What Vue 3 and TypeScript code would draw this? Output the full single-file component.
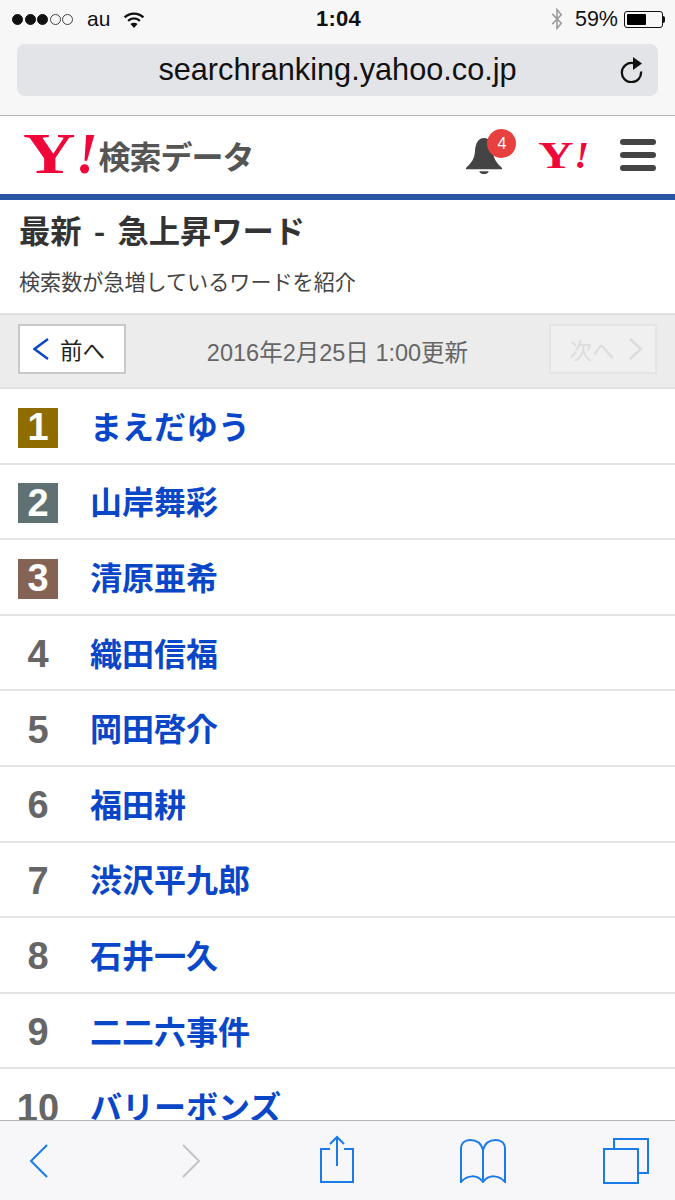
<template>
  <div class="phone">
    <div class="chrome">
      <div class="status">
        <div class="status__left">
          <span class="signal">
            <i v-for="n in 5" :key="n" class="dot" :class="{ 'dot--off': n > 3 }"></i>
          </span>
          <span class="carrier">au</span>
          <svg class="wifi" width="22" height="17" viewBox="0 0 24 19">
            <path d="M1.500 7.200C7.500 1.400 16.500 1.400 22.500 7.200" fill="none" stroke="#111" stroke-width="2.600" />
            <path d="M5.400 11C9.200 7.400 14.800 7.400 18.600 11" fill="none" stroke="#111" stroke-width="2.600" />
            <path d="M12 19 8 14.400C10.200 12.600 13.800 12.600 16 14.400Z" fill="#111" />
          </svg>
        </div>
        <div class="status__time">1:04</div>
        <div class="status__right">
          <svg class="bt" width="14" height="24" viewBox="0 0 14 28">
            <path d="M1.500 8 12 19 7 25V3l5 6L1.500 20" fill="none" stroke="#9a9a9a" stroke-width="1.800" />
          </svg>
          <span class="battery-pct">59%</span>
          <span class="battery"><span class="battery__fill"></span></span>
          <span class="battery-tip"></span>
        </div>
      </div>
      <div class="urlbar">
        <span class="urlbar__text">searchranking.yahoo.co.jp</span>
        <svg class="reload" width="24" height="26" viewBox="0 0 24 26">
          <path d="M13 6.100A9.600 9.600 0 1 0 21 14.500" fill="none" stroke="#111" stroke-width="2.300" />
          <path d="M13 0 22 6.500 13 13Z" fill="#111" />
        </svg>
      </div>
    </div>

    <header class="head">
      <div class="brand">
        <span class="ylogo ylogo--big"><b>Y</b><em>!</em></span>
        <span class="brand__name">検索データ</span>
      </div>
      <div class="head__tools">
        <div class="bell">
          <svg width="38" height="38" viewBox="0 0 40 40">
            <path d="M20 1C13 1 11 8 10.500 15 10 23 7 27 1 32.500V34H39V32.500C33 27 30 23 29.500 15 29 8 27 1 20 1Z" fill="#444" />
            <path d="M15 36H25C24 40 16 40 15 36Z" fill="#444" />
          </svg>
          <span class="bell__badge">4</span>
        </div>
        <span class="ylogo ylogo--small"><b>Y</b><em>!</em></span>
        <div class="burger"><i></i><i></i><i></i></div>
      </div>
    </header>

    <section class="intro">
      <h1>最新 - 急上昇ワード</h1>
      <p>検索数が急増しているワードを紹介</p>
    </section>

    <nav class="pager">
      <div class="pager__btn pager__btn--prev">
        <svg width="16" height="24" viewBox="0 0 16 24">
          <path d="M15 2 1.500 12 15 22" fill="none" stroke="#0b46c4" stroke-width="2.400" />
        </svg>
        <span>前へ</span>
      </div>
      <div class="pager__date">2016年2月25日 1:00更新</div>
      <div class="pager__btn pager__btn--off">
        <span>次へ</span>
        <svg width="16" height="24" viewBox="0 0 16 24">
          <path d="M2 2l11 10L2 22" fill="none" stroke="#dcdcdc" stroke-width="2.400" />
        </svg>
      </div>
    </nav>

    <ol class="ranks">
      <li v-for="(word, i) in words" :key="word" class="rank">
        <span class="rank__no" :class="i < 3 ? `rank__no--${i + 1}` : ''">{{ i + 1 }}</span>
        <a class="rank__word">{{ word }}</a>
      </li>
    </ol>

    <footer class="toolbar">
      <svg width="20" height="34" viewBox="0 0 20 34" class="tool tool--back">
        <path d="M18 1 2 17l16 16" fill="none" stroke="#1a7be8" stroke-width="2" />
      </svg>
      <svg width="20" height="34" viewBox="0 0 20 34" class="tool tool--next">
        <path d="M2 1l16 16L2 33" fill="none" stroke="#c4c4c6" stroke-width="2" />
      </svg>
      <svg width="36" height="48" viewBox="0 0 36 48" class="tool tool--share">
        <path d="M11 14H2V47H34V14H25M18 31V2M11 9 18 2l7 7" fill="none" stroke="#1a7be8" stroke-width="2" />
      </svg>
      <svg width="46" height="44" viewBox="0 0 46 44" class="tool tool--book">
        <path d="M23 11C21 3 15 1 10 1 5 1 1 4 1 10V43C7 36 17 35 23 43 29 35 39 36 45 43V10C45 4 41 1 36 1 31 1 25 3 23 11V41" fill="none" stroke="#1a7be8" stroke-width="2" />
      </svg>
      <svg width="46" height="46" viewBox="0 0 46 46" class="tool tool--tabs">
        <path d="M11 10V1H45V35H35" fill="none" stroke="#1a7be8" stroke-width="2" />
        <rect x="1" y="11" width="34" height="34" fill="none" stroke="#1a7be8" stroke-width="2" />
      </svg>
    </footer>
  </div>
</template>

<script setup lang="ts">
const words: string[] = [
  "まえだゆう",
  "山岸舞彩",
  "清原亜希",
  "織田信福",
  "岡田啓介",
  "福田耕",
  "渋沢平九郎",
  "石井一久",
  "二二六事件",
  "バリーボンズ",
];
</script>

<style>
html,
body {
  margin: 0;
  background: #fff;
}
</style>

<style scoped>
.phone {
  width: 675px;
  height: 1200px;
  display: flex;
  flex-direction: column;
  overflow: hidden;
  background: #fff;
  font-family: "Noto Sans CJK JP", "Liberation Sans", sans-serif;
}

.chrome {
  height: 115px;
  flex: none;
  background: #f7f7f7;
  border-bottom: 1px solid #b4b4b4;
}

.status {
  height: 38px;
  margin-bottom: 6px;
  display: grid;
  grid-template-columns: 1fr auto 1fr;
  align-items: center;
  padding: 0 10px 0 12px;
  font-family: "Liberation Sans", sans-serif;
  color: #111;
}

.status__left,
.status__right {
  display: flex;
  align-items: center;
}

.status__right {
  justify-content: flex-end;
}

.signal {
  display: flex;
  gap: 1.500px;
}

.dot {
  width: 11px;
  height: 11px;
  border-radius: 50%;
  background: #111;
  border: 1px solid #111;
  box-sizing: border-box;
}

.dot--off {
  background: none;
  border-color: #444;
}

.carrier {
  font-size: 21px;
  margin-left: 14px;
}

.wifi {
  margin-left: 13px;
}

.status__time {
  font-size: 22px;
  font-weight: 700;
  letter-spacing: 0.300px;
}

.bt {
  margin-right: 11px;
}

.battery-pct {
  font-size: 21.500px;
  margin-right: 6px;
}

.battery {
  width: 39px;
  height: 17px;
  border: 1px solid #111;
  border-radius: 3px;
  padding: 2px;
  box-sizing: border-box;
  display: block;
}

.battery__fill {
  display: block;
  width: 58%;
  height: 100%;
  background: #000;
  border-radius: 1px;
}

.battery-tip {
  width: 2px;
  height: 7px;
  background: #111;
  border-radius: 0 2px 2px 0;
}

.urlbar {
  margin: 0 17px;
  height: 52px;
  border-radius: 8px;
  background: #e3e4e7;
  display: flex;
  align-items: center;
  justify-content: center;
  position: relative;
}

.urlbar__text {
  font-family: "Liberation Sans", sans-serif;
  font-size: 30.700px;
  color: #111;
}

.reload {
  position: absolute;
  right: 14px;
  top: 13px;
}

.head {
  height: 84px;
  flex: none;
  box-sizing: border-box;
  border-bottom: 6px solid #2a55a4;
  display: flex;
  align-items: center;
  justify-content: space-between;
  padding: 0 19px 0 23px;
}

.brand {
  display: flex;
  align-items: center;
  gap: 1px;
  margin-top: -2px;
}

.ylogo {
  font-family: "Liberation Serif", serif;
  font-weight: 700;
  color: #f0073a;
  line-height: 1;
  white-space: nowrap;
}

.ylogo b {
  display: inline-block;
  transform: scaleX(1.300);
  transform-origin: left center;
  margin-right: 0.220em;
}

.ylogo em {
  font-style: italic;
}

.ylogo--big {
  font-size: 56px;
  height: 50px;
  line-height: 50px;
}

.ylogo--small {
  font-size: 38px;
  margin-left: 35px;
}

.brand__name {
  font-size: 32px;
  font-weight: 700;
  color: #555;
  letter-spacing: -1px;
  line-height: 40px;
  margin-top: 1px;
}

.head__tools {
  display: flex;
  align-items: center;
}

.bell {
  position: relative;
  width: 38px;
  height: 38px;
  margin-top: 2px;
}

.bell svg {
  display: block;
}

.bell__badge {
  position: absolute;
  top: -8px;
  left: 22px;
  width: 29px;
  height: 29px;
  border-radius: 50%;
  background: #e8403f;
  color: #fff;
  font-family: "Liberation Sans", sans-serif;
  font-size: 16px;
  line-height: 29px;
  text-align: center;
}

.burger {
  margin-left: 31px;
  width: 36px;
  display: flex;
  flex-direction: column;
  gap: 7px;
}

.burger i {
  display: block;
  height: 6px;
  border-radius: 3px;
  background: #444;
}

.intro {
  height: 113px;
  flex: none;
  box-sizing: border-box;
  padding: 10px 19px 0;
  color: #333;
}

.intro h1 {
  margin: 0;
  font-size: 31.300px;
  line-height: 40px;
  font-weight: 700;
  word-spacing: 5px;
}

.intro p {
  margin: 18px 0 0;
  font-size: 21.100px;
  line-height: 26px;
  color: #444;
}

.pager {
  height: 76px;
  flex: none;
  box-sizing: border-box;
  background: #ececec;
  border-top: 2px solid #e0e0e0;
  border-bottom: 2px solid #e0e0e0;
  display: flex;
  align-items: center;
  justify-content: space-between;
  padding: 0 18px 4px;
}

.pager__btn {
  width: 108px;
  height: 50px;
  box-sizing: border-box;
  background: #fff;
  border: 2px solid #c8c8c8;
  display: flex;
  align-items: center;
  justify-content: center;
  gap: 14px;
  font-size: 22.500px;
  color: #222;
}

.pager__btn--prev {
  gap: 11px;
  padding-right: 6px;
}

.pager__btn--off {
  background: #f0f0f0;
  border-color: #e4e4e4;
  color: #dcdcdc;
  padding-left: 8px;
}

.pager__date {
  font-size: 23.500px;
  color: #666;
  font-family: "Liberation Sans", "Noto Sans CJK JP", sans-serif;
  margin-top: 4px;
}

.ranks {
  list-style: none;
  margin: 0;
  padding: 0;
  flex: 1;
  min-height: 0;
  overflow: hidden;
}

.rank {
  height: 75.600px;
  box-sizing: border-box;
  border-bottom: 2px solid #e4e4e4;
  display: flex;
  align-items: center;
  padding: 4px 0 0 18px;
}

.rank__no {
  width: 40px;
  height: 40px;
  flex: none;
  display: flex;
  align-items: center;
  justify-content: center;
  font-family: "Liberation Sans", sans-serif;
  font-size: 38px;
  font-weight: 700;
  color: #666;
}

.rank__no--1 {
  background: #8f6c00;
  color: #fff;
}

.rank__no--2 {
  background: #5f7173;
  color: #fff;
}

.rank__no--3 {
  background: #846254;
  color: #fff;
}

.rank__word {
  margin: 0 0 6px 32px;
  font-size: 32px;
  font-weight: 700;
  color: #0a46c8;
  line-height: 40px;
}

.toolbar {
  height: 80px;
  flex: none;
  box-sizing: border-box;
  background: #f7f7f9;
  border-top: 1px solid #b4b4b4;
  display: flex;
  align-items: flex-start;
}

.tool {
  flex: none;
}

.tool--back {
  margin: 23px 0 0 29px;
}

.tool--next {
  margin: 23px 0 0 132px;
}

.tool--share {
  margin: 14px 0 0 118px;
}

.tool--book {
  margin: 18px 0 0 105px;
}

.tool--tabs {
  margin: 17px 0 0 97px;
}
</style>
